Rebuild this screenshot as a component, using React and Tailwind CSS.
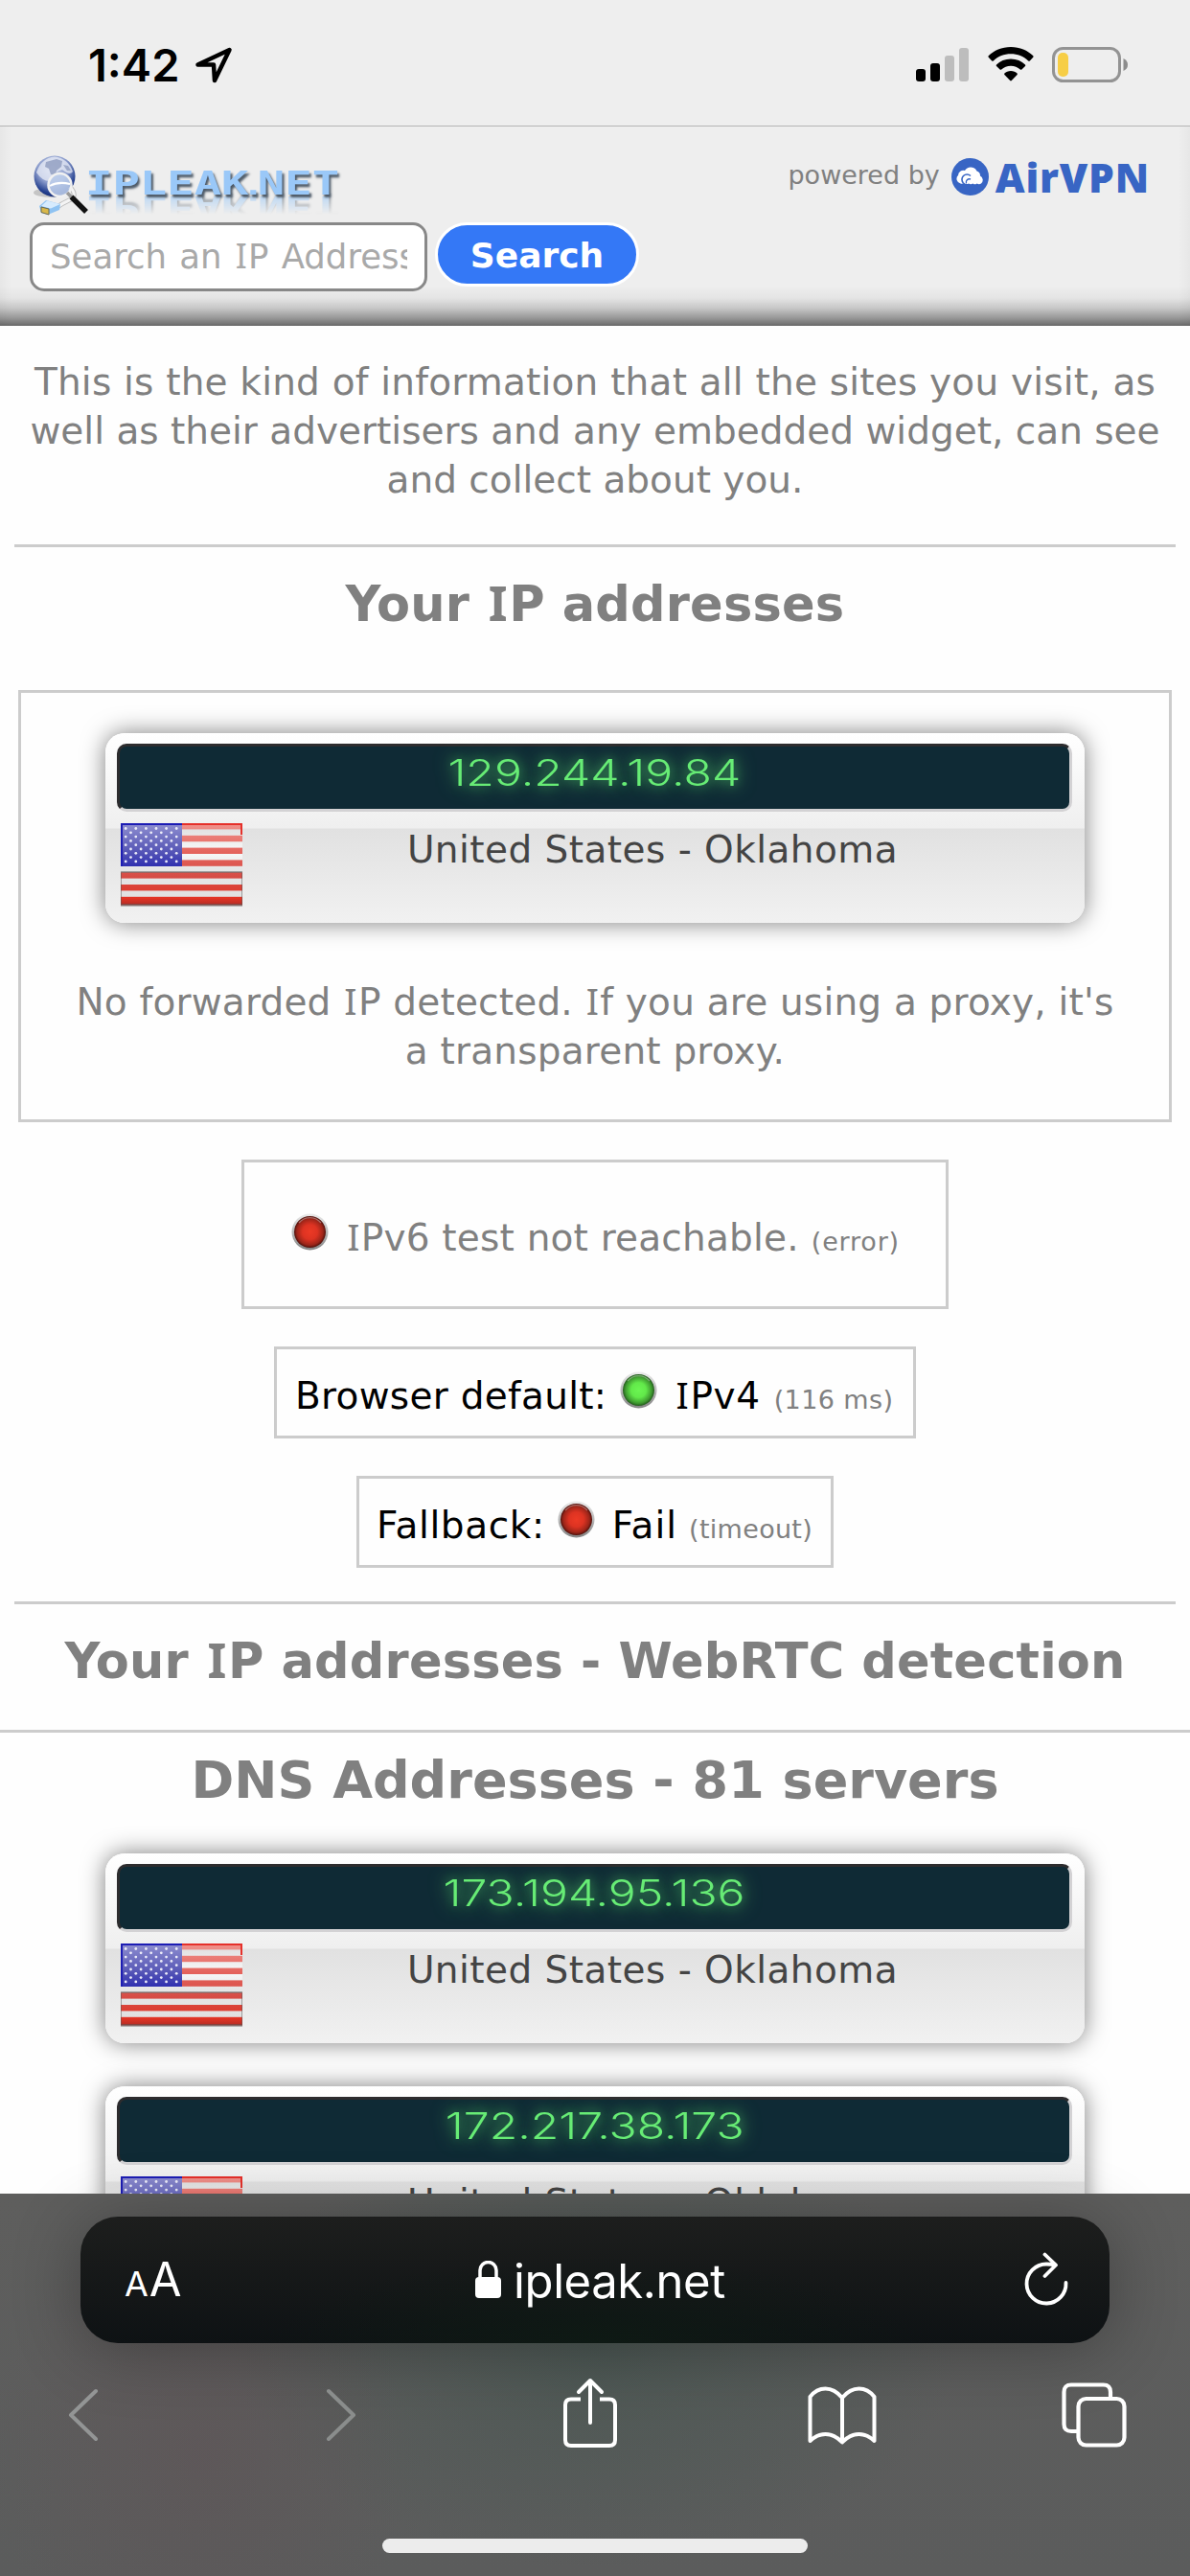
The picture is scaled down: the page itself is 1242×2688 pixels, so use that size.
import React from "react";

function Txt({ children }) {
  return children.split(/(I)/).map((part, i) =>
    part === "I" ? (
      <span key={i} className="mx-[0.03em] font-['Noto_Sans'] leading-none">I</span>
    ) : (
      part
    )
  );
}

function Led({ color, className = "" }) {
  const green = color === "green";
  const id = green ? "led-green" : "led-red";
  return (
    <svg viewBox="0 0 39 39" className={"mb-px size-[39px] shrink-0 " + className}>
      <defs>
        <radialGradient id={id} cx="0.5" cy="0.5" r="0.52">
          <stop offset="0" stopColor={green ? "#6bf552" : "#ec3a25"} />
          <stop offset="0.45" stopColor={green ? "#62e94a" : "#dd3322"} />
          <stop offset="0.8" stopColor={green ? "#3f9a30" : "#9c2519"} />
          <stop offset="1" stopColor={green ? "#1c4a18" : "#3c0c08"} />
        </radialGradient>
        <linearGradient id={id + "-rim"} x1="0" y1="0" x2="0" y2="1">
          <stop offset="0" stopColor="#ececec" />
          <stop offset="0.5" stopColor="#b8b8b8" />
          <stop offset="1" stopColor="#858585" />
        </linearGradient>
      </defs>
      <circle cx="19.5" cy="19.5" r="19" fill={`url(#${id}-rim)`} />
      <circle cx="19.5" cy="19.5" r="16.5" fill={`url(#${id})`} />
      <path d="M8 10 A15 15 0 0 1 31 10" fill="none" stroke="#fff" strokeOpacity="0.35" strokeWidth="1.2" />
    </svg>
  );
}

function Flag() {
  const stars = [];
  for (let r = 0; r < 9; r++) {
    const n = r % 2 === 0 ? 6 : 5;
    for (let k = 0; k < n; k++) {
      stars.push(<circle key={r + "-" + k} cx={5.2 + (r % 2) * 5.3 + k * 10.6} cy={5.5 + r * 4.3} r="1.4" fill="#ececf8" />);
    }
  }
  return (
    <svg viewBox="0 0 127 87" className="h-[87px] w-[127px] shrink-0">
      <defs>
        <linearGradient id="flag-red" x1="0" y1="0" x2="0" y2="87" gradientUnits="userSpaceOnUse">
          <stop offset="0" stopColor="#f0938d" />
          <stop offset="0.35" stopColor="#e4635c" />
          <stop offset="0.65" stopColor="#d64c45" />
          <stop offset="0.9" stopColor="#e23425" />
          <stop offset="1" stopColor="#a82a24" />
        </linearGradient>
        <linearGradient id="flag-white" x1="0" y1="0" x2="0" y2="1">
          <stop offset="0" stopColor="#dcdcdc" />
          <stop offset="0.35" stopColor="#f8f8f8" />
          <stop offset="0.55" stopColor="#e6e6e6" />
          <stop offset="1" stopColor="#e0e0e0" />
        </linearGradient>
        <linearGradient id="flag-blue" x1="0" y1="0" x2="0" y2="1">
          <stop offset="0" stopColor="#8f8fd0" />
          <stop offset="0.6" stopColor="#5c5cb8" />
          <stop offset="1" stopColor="#3030b0" />
        </linearGradient>
      </defs>
      <rect width="127" height="86" fill="url(#flag-white)" />
      {[0, 1, 2, 3, 4, 5, 6].map((i) => (
        <rect key={i} y={i * 12.8} width="127" height={i === 6 ? 9 : 6.4} fill="url(#flag-red)" />
      ))}
      <path d="M64 1 H126 V12" fill="none" stroke="#e5302a" strokeWidth="2" />
      <rect y="51" width="127" height="34" fill="none" stroke="#555" strokeOpacity="0.5" strokeWidth="2" />
      <rect width="64" height="45" fill="url(#flag-blue)" />
      <path d="M1 45 V1 H64" fill="none" stroke="#1c1cb4" strokeWidth="2" />
      {stars}
      <rect y="85.5" width="127" height="1.5" fill="#999" fillOpacity="0.7" />
    </svg>
  );
}

function IpCard({ ip, className = "" }) {
  return (
    <div className={"mx-auto h-[198px] w-[1022px] shrink-0 rounded-[20px] bg-[linear-gradient(to_bottom,#ffffff_0%,#efefef_50%,#e1e1e1_50.5%,#f1f1f1_100%)] pt-[11px] shadow-[0_0_24px_rgba(0,0,0,0.5)] " + className}>
      <div className="mr-[13px] ml-[12px] flex h-[71px] justify-center rounded-[10px] border-[3px] border-t-[#2d2c2e] border-r-[#d3d2d4] border-b-[#d3d2d4] border-l-[#2d2c2e] bg-[#0f2a35] pt-[3px]">
        <span className="scale-x-125 font-['Inter'] text-[38.5px] leading-[48px] font-light text-[#67ec75] [text-shadow:0_0_18px_rgba(103,236,117,0.8),0_0_10px_rgba(103,236,117,0.4)]">{ip}</span>
      </div>
      <div className="mt-[12px] ml-[16px] flex">
        <Flag />
        <div className="mt-[2px] mr-[23px] flex-1 text-center text-[39px] leading-[51px] tracking-[0.45px] text-[#444444]">United States - Oklahoma</div>
      </div>
    </div>
  );
}

function Logo() {
  return (
    <div className="ml-[4px] flex h-[66px]">
      <svg viewBox="0 0 60 66" className="h-[66px] w-[60px] shrink-0">
        <defs>
          <radialGradient id="globe" cx="0.45" cy="0.3" r="0.75">
            <stop offset="0" stopColor="#c9d3ea" />
            <stop offset="0.5" stopColor="#8a9bcb" />
            <stop offset="0.8" stopColor="#24408f" />
            <stop offset="1" stopColor="#12266b" />
          </radialGradient>
        </defs>
        <ellipse cx="18" cy="39" rx="18" ry="5" fill="#777" fillOpacity="0.35" />
        <circle cx="22" cy="22" r="21.500" fill="url(#globe)" />
        <path d="M3 18 Q8 3 22 1.500 Q36 3 41 17 Q38 22 30 15 Q22 16 18 27 Q10 28 3 18Z" fill="#eef1fa" fillOpacity="0.7" />
        <path d="M13 7 L24 4 L30 6 L29 12 L24 16 L23 21 L18 20 L16 14 L12 12Z M31 10 l5 1 3 5 -4 0z" fill="#93a0c2" fillOpacity="0.85" />
        <path d="M38 33 Q47 43 37 47 Q30 50 22 56" fill="none" stroke="#bdbdbd" strokeWidth="5" />
        <path d="M38 33 Q47 43 37 47 Q30 50 22 56" fill="none" stroke="#f4f4f4" strokeWidth="3" />
        <circle cx="27.500" cy="31" r="12" fill="#bfd0ec" fillOpacity="0.85" stroke="#f1f1f1" strokeWidth="2.500" />
        <path d="M17 32 Q26 27 38 30" fill="none" stroke="#fff" strokeWidth="2" />
        <path d="M35 39 L40 44" stroke="#999" strokeWidth="3.500" />
        <path d="M39.500 43.500 L55 59" stroke="#111" strokeWidth="5.500" />
        <path d="M6 53 L13 47 L28 51 L27 57 L15 62 L8 60Z" fill="#8fc3f2" />
        <path d="M8 53 L14 47.500 L28 51 L18 55.500Z" fill="#d6ebfd" />
        <path d="M8 54 L16 56 V62 L8 59.500Z" fill="#d9b84a" stroke="#6a6a50" strokeWidth="1" />
      </svg>
      <div className="mt-[11px] -ml-[6px] h-[38px] origin-left scale-x-[1.43] font-['DejaVu_Sans_Mono'] text-[33px] leading-[38px] font-bold text-[#9ac8f8] [-webkit-box-reflect:below_-14px_linear-gradient(transparent_30%,rgba(0,0,0,0.8))] [text-shadow:1.5px_3px_2px_#4d5a68]">
        IPLEAK<span className="-mx-[1.3px] font-['DejaVu_Sans'] text-[24px] leading-none">.</span>NET
      </div>
    </div>
  );
}

export default function App() {
  return (
    <div className="flex h-[2688px] w-[1242px] flex-col overflow-hidden bg-[#fefefe] font-['DejaVu_Sans',sans-serif] text-[#808080]">
      {/* Status bar */}
      <div className="flex h-[132px] shrink-0 items-start justify-between border-b border-[#b4b4b4] bg-[#eeeeee] text-black">
        <div className="mt-[39px] ml-[92px] flex">
          <span className="font-['Inter'] text-[47px] leading-[58px] font-semibold">1:42</span>
          <svg viewBox="0 0 40 40" className="mt-[10px] ml-[16px] size-[40px]" fill="none" stroke="#000" strokeWidth="4.500" strokeLinejoin="round">
            <path d="M36.500 3 L3.500 18.500 H20 L21 35 Z" />
          </svg>
        </div>
        <div className="mt-[49px] mr-[64px] flex items-start">
          <svg viewBox="0 0 55 37" className="h-[37px] w-[55px]">
            <rect x="0" y="23" width="10" height="13" rx="3" fill="#000" />
            <rect x="15" y="17" width="10" height="19" rx="3" fill="#000" />
            <rect x="30" y="9" width="10" height="27" rx="3" fill="#bdbdbd" />
            <rect x="45" y="1" width="10" height="35" rx="3" fill="#bdbdbd" />
          </svg>
          <svg viewBox="0 0 48 37" className="ml-[20px] h-[37px] w-[48px]">
            <path d="M24 0 C33.500 0 41.500 3.500 47.300 9.300 Q48 10 47.300 10.800 L43.800 14.400 Q43 15.100 42.200 14.400 C37.200 9.800 31 7.300 24 7.300 C17 7.300 10.800 9.800 5.800 14.400 Q5 15.100 4.200 14.400 L0.700 10.800 Q0 10 0.700 9.300 C6.500 3.500 14.500 0 24 0Z" />
            <path d="M24 12.500 C30 12.500 35.200 14.700 39 18.400 Q39.700 19.200 39 20 L35.400 23.500 Q34.600 24.200 33.800 23.500 C31.200 21.200 27.900 19.800 24 19.800 C20.100 19.800 16.800 21.200 14.200 23.500 Q13.400 24.200 12.600 23.500 L9 20 Q8.300 19.200 9 18.400 C12.800 14.700 18 12.500 24 12.500Z" />
            <path d="M24 25 C26.700 25 29 26 30.600 27.500 Q31.200 28.200 30.600 29 L24.800 35 Q24 35.800 23.200 35 L17.400 29 Q16.800 28.200 17.400 27.500 C19 26 21.300 25 24 25Z" />
          </svg>
          <svg viewBox="0 0 80 37" className="ml-[19px] h-[37px] w-[80px]">
            <rect x="1.500" y="1.500" width="69" height="34" rx="10" fill="none" stroke="#939393" strokeWidth="3" />
            <rect x="6" y="6" width="11" height="25" rx="5" fill="#f7ce46" />
            <path d="M74.500 12 Q79 14 79 18.500 Q79 23 74.500 25Z" fill="#8c8c8c" />
          </svg>
        </div>
      </div>

      {/* Site header */}
      <header className="flex h-[208px] shrink-0 flex-col bg-[#eeeeee] bg-[linear-gradient(to_bottom,transparent_80%,rgba(0,0,0,0.04)_86%,rgba(0,0,0,0.16)_91%,rgba(0,0,0,0.36)_96%,rgba(0,0,0,0.56)_100%),linear-gradient(to_right,rgba(0,0,0,0.03),transparent_12px,transparent_1230px,rgba(0,0,0,0.03))] px-[31px] pt-[30px]">
        <div className="flex h-[70px] items-start justify-between">
          <Logo />
          <div className="flex items-start pr-[11px]">
            <span className="mt-[4px] mr-[12px] text-[27px] leading-[34px]">powered by</span>
            <svg viewBox="0 0 39 39" className="mt-[3px] mr-[7px] size-[39px]">
              <circle cx="19.500" cy="19.500" r="19.500" fill="#3865c4" />
              <path d="M9.500 26.500 A5 5 0 0 1 7 18 A5.500 5.500 0 0 1 14 13 A7 7 0 0 1 26.500 13.500 A5 5 0 0 1 30 18.500 A4.800 4.800 0 0 1 31 26.500 Q29 28 26.500 26.500 Q24.500 28.200 22.500 26.500 Q20 28 18 26.500 Q15 28 13 25.500 Q11.500 27.500 9.500 26.500Z" fill="#fff" />
              <path d="M12.500 26 A5 5 0 0 1 20 18.500" fill="none" stroke="#3865c4" strokeWidth="1.600" />
              <path d="M15.500 26.500 A3.500 3.500 0 0 1 20 22" fill="none" stroke="#3865c4" strokeWidth="1.400" />
            </svg>
            <span className="-mt-[4px] font-['Open_Sans'] text-[42.5px] leading-[54px] font-extrabold tracking-[0.8px] text-[#3865c4]">AirVPN</span>
          </div>
        </div>
        <div className="flex items-start gap-[8px]">
          <div className="flex h-[72px] w-[415px] items-center rounded-[15px] border-[3px] border-[#888888] bg-white px-[18px]">
            <div className="w-full overflow-hidden text-[35.500px] leading-[50px] [word-spacing:2px] whitespace-nowrap text-[#a9a9a9]">
              <Txt>Search an IP Address</Txt>
            </div>
          </div>
          <div className="flex h-[67px] w-[213px] items-center justify-center rounded-full border-[3px] border-white bg-[#3478f6] pt-[2px] text-[36px] leading-[48px] font-bold text-white">Search</div>
        </div>
      </header>

      <main className="flex min-h-0 flex-1 flex-col overflow-hidden">
        <p className="mt-[33px] shrink-0 text-center text-[39px] leading-[51px]">
          <span className="tracking-[0.2px]">This is the kind of information that all the sites you visit, as</span>
          <br />
          well as their advertisers and any embedded widget, can see
          <br />
          and collect about you.
        </p>
        <div className="mx-[15px] mt-[42px] h-[3px] shrink-0 bg-[#cccccc]" />
        <h2 className="mt-[30px] h-[60px] shrink-0 text-center text-[51px] leading-[60px] font-bold tracking-[0.2px]"><Txt>Your IP addresses</Txt></h2>

        <section className="mx-[19px] mt-[59px] h-[451px] shrink-0 border-[3px] border-[#cccccc] pt-[42px]">
          <IpCard ip="129.244.19.84" />
          <p className="mt-[57px] text-center text-[39px] leading-[51px] tracking-[0.2px]">
            <Txt>No forwarded IP detected. If you are using a proxy, it's</Txt>
            <br />
            a transparent proxy.
          </p>
        </section>

        <div className="mx-auto mt-[39px] flex h-[156px] w-[738px] shrink-0 items-baseline border-[3px] border-[#cccccc] pt-[53px] pl-[49px] text-[39px] leading-[51px]">
          <Led color="red" />
          <span className="ml-[18px] tracking-[0.2px]"><Txt>IPv6 test not reachable.</Txt></span>
          <span className="ml-[13px] text-[27px] tracking-[0.8px]">(error)</span>
        </div>

        <div className="mx-auto mt-[39px] flex h-[96px] w-[670px] shrink-0 items-baseline border-[3px] border-[#cccccc] pt-[23px] pl-[19px] text-[39px] leading-[51px] text-black">
          <span className="tracking-[0.28px]">Browser default:</span>
          <Led color="green" className="ml-[14px]" />
          <span className="ml-[18px] tracking-[0.6px]"><Txt>IPv4</Txt></span>
          <span className="ml-[14px] text-[27px] tracking-[0.4px] text-[#808080]">(116 ms)</span>
        </div>

        <div className="mx-auto mt-[39px] flex h-[96px] w-[498px] shrink-0 items-baseline border-[3px] border-[#cccccc] pt-[23px] pl-[18px] text-[39px] leading-[51px] text-black">
          <span className="tracking-[0.6px]">Fallback:</span>
          <Led color="red" className="ml-[13px]" />
          <span className="ml-[18px] tracking-[1px]">Fail</span>
          <span className="ml-[12px] text-[27px] tracking-[0.3px] text-[#808080]">(timeout)</span>
        </div>

        <div className="mx-[15px] mt-[35px] h-[3px] shrink-0 bg-[#cccccc]" />
        <h2 className="mt-[30px] h-[60px] shrink-0 text-center text-[51px] leading-[60px] font-bold tracking-[0.2px]"><Txt>Your IP addresses - WebRTC detection</Txt></h2>
        <div className="mt-[41px] h-[3px] shrink-0 bg-[#cccccc]" />
        <h2 className="mt-[18px] shrink-0 text-center text-[54px] leading-[64px] font-bold">DNS Addresses - 81 servers</h2>
        <IpCard ip="173.194.95.136" className="mt-[44px]" />
        <IpCard ip="172.217.38.173" className="mt-[45px]" />
      </main>

      {/* Browser toolbar */}
      <footer className="flex h-[399px] shrink-0 flex-col bg-[#5f5f5f] bg-[radial-gradient(ellipse_220px_260px_at_210px_270px,rgba(96,80,84,0.4),transparent),radial-gradient(ellipse_380px_230px_at_621px_160px,rgba(66,84,78,0.6),transparent),linear-gradient(to_bottom,#5e5e5d,#5b5c5c)]">
        <div className="mx-[84px] mt-[24px] flex h-[132px] items-center rounded-[39px] bg-[#141616] bg-[radial-gradient(ellipse_340px_90px_at_50%_100%,rgba(14,26,20,0.9),transparent),linear-gradient(to_bottom,#1d1e1d,#0e1214)] pt-[3px] text-white shadow-[0_6px_70px_rgba(0,0,0,0.3)]">
          <div className="flex w-[180px] items-baseline pl-[46px] font-['Inter'] leading-[60px]">
            <span className="text-[36px]">A</span>
            <span className="ml-px text-[49px]">A</span>
          </div>
          <div className="ml-[11px] flex flex-1 items-center justify-center">
            <svg viewBox="0 0 27 40" className="mr-[13px] mb-[4px] h-[40px] w-[27px]">
              <rect x="0" y="17" width="27" height="22" rx="4" fill="#fff" />
              <path d="M5 18 V10 A8.500 8.500 0 0 1 22 10 V18" fill="none" stroke="#fff" strokeWidth="3.500" />
            </svg>
            <span className="font-['Inter'] text-[49px] leading-[60px] tracking-[-0.4px]">ipleak.net</span>
          </div>
          <div className="flex w-[180px] justify-end pr-[43px]">
            <svg viewBox="0 0 46 56" className="mb-[6px] h-[56px] w-[46px]" fill="none" stroke="#fff" strokeWidth="3.800" strokeLinecap="round" strokeLinejoin="round">
              <path d="M43.500 32 A20.500 20.500 0 1 1 23 12.500 Q28 12.500 32 13.500" />
              <path d="M21.500 2.500 L33 13.500 L21.500 25" />
            </svg>
          </div>
        </div>
        <div className="mt-[36px] flex h-[74px] items-start pl-[70px]">
          <svg viewBox="0 0 34 56" className="mt-[11px] h-[56px] w-[34px]" fill="none" stroke="#939595" strokeWidth="4" strokeLinecap="round" strokeLinejoin="round">
            <path d="M30 3 L4 28 L30 53" />
          </svg>
          <svg viewBox="0 0 34 56" className="mt-[11px] ml-[235px] h-[56px] w-[34px]" fill="none" stroke="#8a8d8c" strokeWidth="4" strokeLinecap="round" strokeLinejoin="round">
            <path d="M4 3 L30 28 L4 53" />
          </svg>
          <svg viewBox="0 0 58 74" className="ml-[214px] h-[74px] w-[58px]" fill="none" stroke="#fff" strokeWidth="4" strokeLinecap="round" strokeLinejoin="round">
            <path d="M19 22.500 H9 Q3 22.500 3 28.500 V65 Q3 71 9 71 H49 Q55 71 55 65 V28.500 Q55 22.500 49 22.500 H39" strokeLinecap="butt" />
            <path d="M29 47 V3 M17 15 L29 3 L41 15" />
          </svg>
          <svg viewBox="0 0 72 62" className="mt-[9px] ml-[198px] h-[62px] w-[72px]" fill="none" stroke="#fff" strokeWidth="4" strokeLinejoin="round">
            <path d="M36 12 Q28 2.500 18.500 2.500 Q9 2.500 2.500 11 V57 Q10 50 18.500 50 Q28 50 36 58.500 Q44 50 53.500 50 Q62 50 69.500 57 V11 Q63 2.500 53.500 2.500 Q44 2.500 36 12 V58" />
          </svg>
          <svg viewBox="0 0 68 68" className="mt-[5px] ml-[193px] h-[68px] w-[68px]" fill="none" stroke="#fff" strokeWidth="4.200">
            <path d="M17 51 H10 Q2.500 51 2.500 43.500 V10 Q2.500 2.500 10 2.500 H43.500 Q51 2.500 51 10 V17" />
            <rect x="17.500" y="17" width="48" height="48.500" rx="8" />
          </svg>
        </div>
        <div className="mx-auto mt-[94px] h-[15px] w-[444px] rounded-full bg-[#ececec]" />
      </footer>
    </div>
  );
}
